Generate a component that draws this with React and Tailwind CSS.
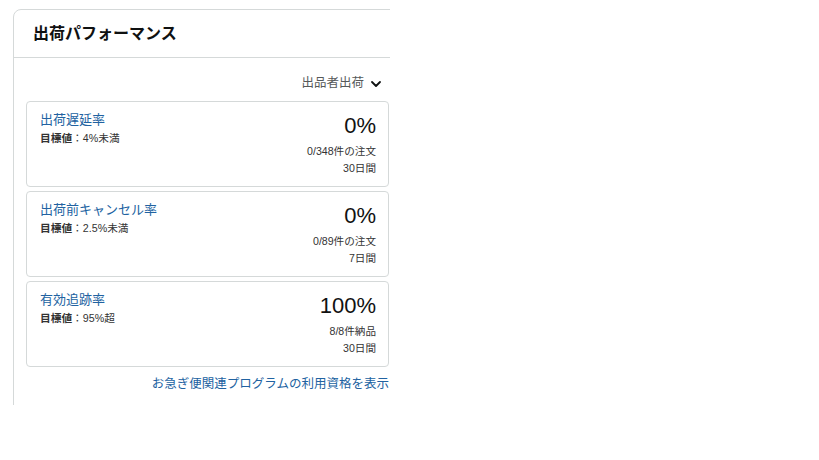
import { ChevronDown } from 'lucide-react';

const metrics = [
  { title: '出荷遅延率', target: '4%未満', value: '0%', count: '0/348件の注文', period: '30日間' },
  { title: '出荷前キャンセル率', target: '2.5%未満', value: '0%', count: '0/89件の注文', period: '7日間' },
  { title: '有効追跡率', target: '95%超', value: '100%', count: '8/8件納品', period: '30日間' },
];

const MetricCard = ({ m }) => (
  <div className="h-[86px] border border-[#d5d9d9] rounded-[4px] pl-[13px] pr-[12px] pt-[9px] flex justify-between">
    <div>
      <p className="text-[13px] leading-[18px] text-[#2162a1]">{m.title}</p>
      <p className="text-[10.7px] leading-[16px] text-[#333] mt-[1px]">
        <span className="font-bold">目標値</span>：{m.target}
      </p>
    </div>
    <div className="text-right text-[#333]">
      <p className="text-[22px] leading-[30px] text-[#111]">{m.value}</p>
      <p className="text-[10.6px] leading-[17px] mt-[2px]">{m.count}</p>
      <p className="text-[10.6px] leading-[17px]">{m.period}</p>
    </div>
  </div>
);

const App = () => {
  return (
    <div className="w-[819px] h-[460px] bg-white pt-[9px] pl-[13px] font-['Liberation_Sans','Noto_Sans_CJK_JP',sans-serif]">
      <div className="w-[377px] h-[396px] overflow-hidden">
        <div className="w-[400px] h-[420px] border border-[#d5d9d9] rounded-lg">
          {/* Header */}
          <div className="h-[48px] border-b border-[#d5d9d9] pl-[19px] flex items-center">
            <h2 className="text-[16px] font-bold text-[#0f1111]">出荷パフォーマンス</h2>
          </div>

          {/* Body */}
          <div className="pl-[12px] w-[375px]">
            <div className="h-[43px] flex items-center justify-end pr-[5px] pt-[8px] gap-[4px]">
              <span className="text-[12.5px] text-[#565959]">出品者出荷</span>
              <ChevronDown className="w-[16px] h-[16px] text-[#0f1111]" strokeWidth={2.75} />
            </div>
            <div className="flex flex-col gap-[4px]">
              {metrics.map((m) => (
                <MetricCard key={m.title} m={m} />
              ))}
            </div>
            <div className="text-right mt-[4px]">
              <a className="text-[12.5px] text-[#2162a1]">お急ぎ便関連プログラムの利用資格を表示</a>
            </div>
          </div>
        </div>
      </div>
    </div>
  );
};

export default App;
